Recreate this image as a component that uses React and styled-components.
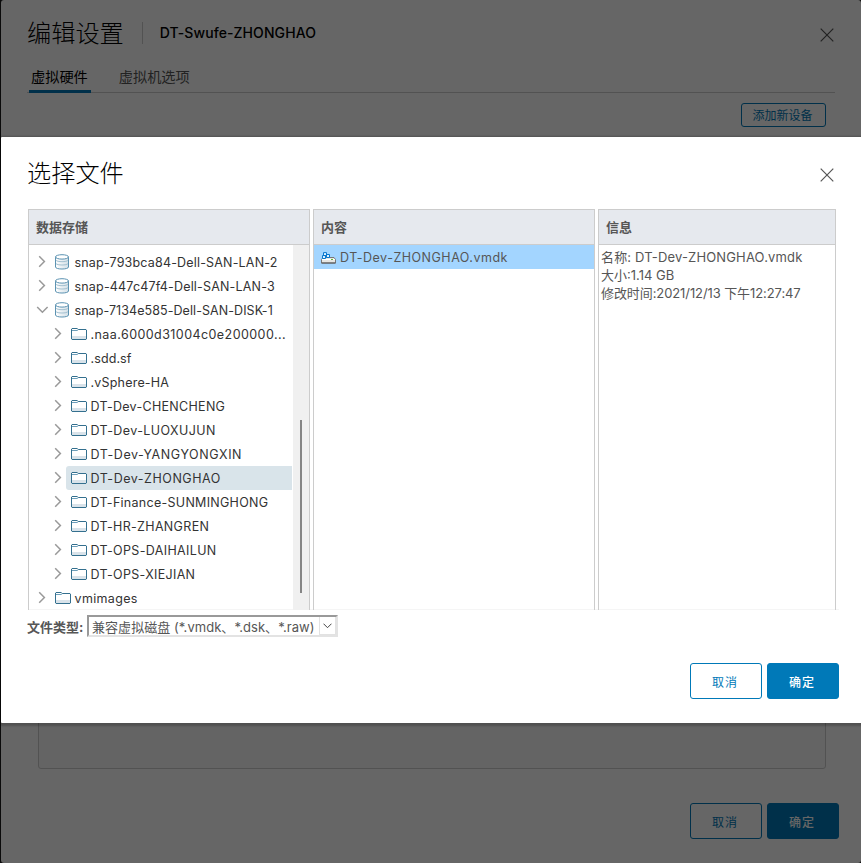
import React from "react";
import styled, { createGlobalStyle } from "styled-components";

const Global = createGlobalStyle`
  * { box-sizing: border-box; }
  html, body { margin: 0; padding: 0; background: #1b1b1b; overflow: hidden; }
  body {
    font-family: Inter, "Noto Sans CJK SC", sans-serif;
    font-size: 13px;
    color: #565656;
  }
  button { font-family: inherit; }
`;

const Screen = styled.div`
  position: relative;
  width: 861px;
  height: 863px;
  padding-left: 1px;
  overflow: hidden;
`;

const SettingsPage = styled.section`
  display: flex;
  flex-direction: column;
  height: 863px;
  padding: 0 22px 24px 27px;
  background: #fff;
  border-radius: 3px;
`;

const Backdrop = styled.div`
  position: absolute;
  inset: 0;
  background: rgba(0, 0, 0, 0.6);
`;

const Dialog = styled.section`
  position: absolute;
  top: 137px;
  left: 1px;
  right: 0;
  height: 586px;
  display: flex;
  flex-direction: column;
  padding: 0 22px 24px 27px;
  background: #fff;
  border-radius: 1px 0 0 1px;
  box-shadow: 0 1px 2px 2px rgba(0, 0, 0, 0.2);
`;

const TitleBar = styled.header`
  display: flex;
  align-items: center;
  height: 72px;
  padding: ${(p) => (p.$modal ? "2px 5px 0 0" : "0 5px 4px 0")};
`;

const Title = styled.h1`
  margin: 0 0 ${(p) => (p.$modal ? 0 : 1)}px -1px;
  font-size: 24.2px;
  font-weight: 200;
  line-height: 24px;
  color: #000;
`;

const Subtitle = styled.h2`
  margin: 0 0 3px 18px;
  padding-left: 17px;
  border-left: 1px solid #ccc;
  font-size: 14px;
  font-weight: 500;
  line-height: 22px;
  letter-spacing: 0.08px;
  color: #000;
`;

const CloseButton = styled.button`
  display: flex;
  margin: 2px 0 0 auto;
  padding: 0;
  border: 0;
  background: none;
`;

const Tabs = styled.nav`
  display: flex;
  gap: 25px;
  width: 808px;
  height: 29px;
  margin-top: -8px;
  margin-left: -1px;
  padding-left: 1px;
  box-shadow: inset 0 -1px #ccc;
`;

const Tab = styled.div`
  height: 29px;
  margin-left: 1px;
  padding: 0 3px 0 2px;
  font-size: 14.2px;
  font-weight: 400;
  line-height: 26px;
  color: ${(p) => (p.$active ? "#000" : "#565656")};
  border-bottom: 3px solid ${(p) => (p.$active ? "#0079b8" : "transparent")};
`;

const DeviceToolbar = styled.div`
  display: flex;
  justify-content: flex-end;
  padding: 10px 13px 0 0;
`;

const SmallButton = styled.button`
  width: 85px;
  height: 24px;
  padding: 1px 2px 0 0;
  border: 1px solid #0079b8;
  border-radius: 3px;
  background: transparent;
  color: #0079b8;
  font-size: 12px;
  line-height: 22px;
`;

const DeviceList = styled.div`
  flex: 1;
  margin: 20px 13px 34px 10px;
  border: 1px solid #ccc;
  border-radius: 3px;
  background: #fafafa;
`;

const Footer = styled.footer`
  display: flex;
  justify-content: flex-end;
  gap: 5px;
  margin-top: auto;
`;

const Button = styled.button`
  width: 72px;
  height: 36px;
  padding: 2px 2px 0 0;
  border: 1px solid #0079b8;
  border-radius: 3px;
  background: ${(p) => (p.$primary ? "#0079b8" : "transparent")};
  color: ${(p) => (p.$primary ? "#fff" : "#0079b8")};
  font-size: 12px;
  font-weight: ${(p) => (p.$primary ? 500 : 400)};
  letter-spacing: 1px;
  line-height: 34px;
`;

const Panels = styled.div`
  display: grid;
  grid-template-columns: 282px 282px 238px;
  gap: 3px;
  height: 401px;
  border-bottom: 1px solid #f5f5f5;
`;

const Panel = styled.section`
  display: flex;
  flex-direction: column;
  min-width: 0;
  border: 1px solid #ccc;
  border-bottom: 0;
`;

const PanelHeader = styled.h3`
  flex: none;
  height: 35px;
  margin: 0;
  padding: 1px 0 0 7px;
  border-bottom: 1px solid #ccc;
  background: #e6e9ee;
  color: #565656;
  font-size: 13px;
  font-weight: 700;
  line-height: 33px;
`;

const TreeBody = styled.div`
  display: flex;
  flex: 1;
  min-height: 0;
`;

const Tree = styled.ul`
  flex: 1;
  margin: 0;
  padding: 5px 1px 0 0;
  list-style: none;
  overflow: hidden;
`;

const TreeRow = styled.li`
  display: flex;
  height: 24px;
  padding-left: ${(p) => 7 + p.$depth * 16}px;
`;

const Toggle = styled.span`
  display: flex;
  flex: none;
  align-items: center;
  width: 14px;
  padding-bottom: 1px;
`;

const Node = styled.span`
  display: flex;
  flex: 1;
  align-items: center;
  padding-left: ${(p) => (p.$store ? 4 : 5)}px;
  border-radius: 3px 0 0 3px;
  background: ${(p) => (p.$selected ? "#d9e4ea" : "transparent")};
`;

const NodeLabel = styled.span`
  margin-left: ${(p) => (p.$store ? 4.5 : 3.5)}px;
  padding-top: 1px;
  color: #333;
  font-size: 12.5px;
  line-height: 23px;
  letter-spacing: ${(p) => p.$track || 0}px;
  white-space: nowrap;
`;

const ScrollTrack = styled.div`
  flex: none;
  width: 16px;
  padding: 175px 0 0 7px;
  background: #f0f0f0;
`;

const ScrollThumb = styled.div`
  width: 2px;
  height: 173px;
  background: #858585;
`;

const FileRow = styled.div`
  display: flex;
  align-items: center;
  gap: 4px;
  height: 24px;
  padding: 1px 0 0 7px;
  background: #a3d5ff;
  font-size: 12.5px;
  letter-spacing: 0.5px;
`;

const Info = styled.div`
  padding: 3px 0 0 2px;
`;

const InfoLine = styled.div`
  height: 18px;
  line-height: 18px;
  letter-spacing: ${(p) => p.$track || 0}px;
  white-space: nowrap;
`;

const FilterRow = styled.div`
  display: flex;
  align-items: center;
  gap: 4px;
  height: 22px;
  margin-top: 5px;
`;

const FilterLabel = styled.span`
  width: 56px;
  margin-left: -1px;
  font-weight: 700;
  white-space: nowrap;
`;

const Select = styled.div`
  display: flex;
  align-items: center;
  justify-content: space-between;
  width: 251px;
  height: 22px;
  padding-left: 3px;
  border: 2px solid;
  border-color: #999 #e3e3e3 #e3e3e3 #999;
  letter-spacing: 0.05px;
  white-space: nowrap;
`;

const SelectArrow = styled.span`
  display: flex;
  align-items: center;
  justify-content: center;
  width: 17px;
  height: 18px;
  border: 1px solid #e2e2e2;
  border-top: 0;
`;

const CloseIcon = () => (
  <svg width="14" height="14" viewBox="0 0 14 14" fill="none" stroke="#565656" strokeWidth="1.2">
    <path d="M.7.7l12.6 12.6M13.3.7.7 13.3" />
  </svg>
);

const Chevron = ({ open }) => (
  <svg width="13" height="13" viewBox="0 0 13 13" fill="none" stroke="#999" strokeWidth="1.5">
    <path d={open ? "M1.2 4l5.2 5.2L11.6 4" : "M3.2 1.2l5.2 5.3-5.2 5.3"} />
  </svg>
);

const DatastoreIcon = () => (
  <svg width="16" height="16" viewBox="0 0 16 16">
    <defs>
      <linearGradient id="cylinder">
        <stop offset="0" stopColor="#fff" />
        <stop offset="1" stopColor="#d2dfe7" />
      </linearGradient>
    </defs>
    <path d="M1.5 3v10c0 2.7 13 2.7 13 0V3z" fill="url(#cylinder)" stroke="#5c93b2" />
    <ellipse cx="8" cy="2.9" rx="6.5" ry="2.2" fill="#fff" stroke="#5c93b2" />
    <path d="M2 6.2c1 2 11 2 12 0M2 9.5c1 2 11 2 12 0" fill="none" stroke="#a3c0d0" />
  </svg>
);

const FolderIcon = () => (
  <svg width="16" height="12" viewBox="0 0 16 12">
    <path d="M.5 11.5V1L1 .5h5l1.2 1h8.3v10z" fill="#fff" />
    <path d="M1 8h14v3H1z" fill="#d9e3ea" />
    <path d="M.5 11V1L1 .5h5.3l.9 1h7.8l.5.5v9l-.5.5H1z" fill="none" stroke="#34708f" />
    <path d="M1 2.5h5l1.2-.7" fill="none" stroke="#6d9fba" />
  </svg>
);

const DiskIcon = () => (
  <svg width="15" height="12" viewBox="0 0 15 12">
    <path d="M2 5.5h11l1.5 2v3.5H.5V7.5z" fill="#e6e6e3" stroke="#777" />
    <path d="M1 7.5h13" stroke="#fff" />
    <path d="M.5 11h14" stroke="#555" />
    <path d="M10 7.5h2" stroke="#64b534" />
    <g fill="#dff0ff" stroke="#0878cf">
      <path d="M2.5.6h3v3h-3zM1.5 3.5h3v3h-3zM5.5 2.5h3v3h-3z" />
    </g>
  </svg>
);

const nodes = [
  { label: "snap-793bca84-Dell-SAN-LAN-2", store: true, track: 0.18 },
  { label: "snap-447c47f4-Dell-SAN-LAN-3", store: true, track: 0.18 },
  { label: "snap-7134e585-Dell-SAN-DISK-1", store: true, open: true, track: 0.07 },
  { label: ".naa.6000d31004c0e200000...", depth: 1, track: 0.43 },
  { label: ".sdd.sf", depth: 1, track: 0.1 },
  { label: ".vSphere-HA", depth: 1, track: 0.2 },
  { label: "DT-Dev-CHENCHENG", depth: 1, track: 0.3 },
  { label: "DT-Dev-LUOXUJUN", depth: 1, track: 0.42 },
  { label: "DT-Dev-YANGYONGXIN", depth: 1, track: 0.58 },
  { label: "DT-Dev-ZHONGHAO", depth: 1, selected: true, track: 0.53 },
  { label: "DT-Finance-SUNMINGHONG", depth: 1, track: 0.28 },
  { label: "DT-HR-ZHANGREN", depth: 1, track: 0.33 },
  { label: "DT-OPS-DAIHAILUN", depth: 1, track: 0.35 },
  { label: "DT-OPS-XIEJIAN", depth: 1, track: 0.32 },
  { label: "vmimages", track: 0.35 },
];

const DatastoreTree = () => (
  <Tree>
    {nodes.map((n) => (
      <TreeRow key={n.label} $depth={n.depth || 0}>
        <Toggle>
          <Chevron open={n.open} />
        </Toggle>
        <Node $store={n.store} $selected={n.selected}>
          {n.store ? <DatastoreIcon /> : <FolderIcon />}
          <NodeLabel $store={n.store} $track={n.track}>
            {n.label}
          </NodeLabel>
        </Node>
      </TreeRow>
    ))}
  </Tree>
);

const Actions = () => (
  <Footer>
    <Button>取消</Button>
    <Button $primary>确定</Button>
  </Footer>
);

export default function App() {
  return (
    <Screen>
      <Global />
      <SettingsPage>
        <TitleBar>
          <Title>编辑设置</Title>
          <Subtitle>DT-Swufe-ZHONGHAO</Subtitle>
          <CloseButton aria-label="关闭">
            <CloseIcon />
          </CloseButton>
        </TitleBar>
        <Tabs>
          <Tab $active>虚拟硬件</Tab>
          <Tab>虚拟机选项</Tab>
        </Tabs>
        <DeviceToolbar>
          <SmallButton>添加新设备</SmallButton>
        </DeviceToolbar>
        <DeviceList />
        <Actions />
      </SettingsPage>
      <Backdrop />
      <Dialog>
        <TitleBar $modal>
          <Title $modal>选择文件</Title>
          <CloseButton aria-label="关闭">
            <CloseIcon />
          </CloseButton>
        </TitleBar>
        <Panels>
          <Panel>
            <PanelHeader>数据存储</PanelHeader>
            <TreeBody>
              <DatastoreTree />
              <ScrollTrack>
                <ScrollThumb />
              </ScrollTrack>
            </TreeBody>
          </Panel>
          <Panel>
            <PanelHeader>内容</PanelHeader>
            <FileRow>
              <DiskIcon />
              DT-Dev-ZHONGHAO.vmdk
            </FileRow>
          </Panel>
          <Panel>
            <PanelHeader>信息</PanelHeader>
            <Info>
              <InfoLine $track={0.16}>名称: DT-Dev-ZHONGHAO.vmdk</InfoLine>
              <InfoLine>大小:1.14 GB</InfoLine>
              <InfoLine $track={-0.09}>修改时间:2021/12/13 下午12:27:47</InfoLine>
            </Info>
          </Panel>
        </Panels>
        <FilterRow>
          <FilterLabel>文件类型:</FilterLabel>
          <Select>
            兼容虚拟磁盘 (*.vmdk、*.dsk、*.raw)
            <SelectArrow>
              <svg width="9" height="6" viewBox="0 0 9 6" fill="none" stroke="#444">
                <path d="M.5.7l4 4 4-4" />
              </svg>
            </SelectArrow>
          </Select>
        </FilterRow>
        <Actions />
      </Dialog>
    </Screen>
  );
}
